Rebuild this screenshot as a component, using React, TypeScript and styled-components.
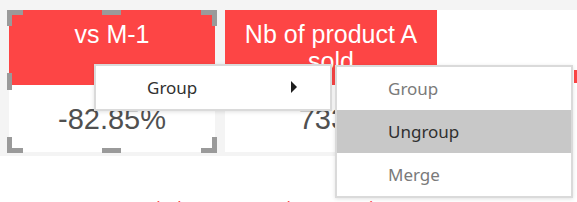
import React from 'react';
import styled, { createGlobalStyle } from 'styled-components';

const GlobalStyle = createGlobalStyle`
  html, body {
    margin: 0;
    padding: 0;
    background: #ffffff;
  }
  body {
    font-family: "Liberation Sans", Arial, sans-serif;
  }
`;

const Page = styled.div`
  position: relative;
  width: 577px;
  height: 202px;
  overflow: hidden;
  background: #ffffff;
`;

const TopStrip = styled.div`
  height: 10px;
  background: #f4f4f4;
`;

const Row = styled.div`
  display: flex;
  align-items: flex-start;
`;

const VisualGroup = styled.div`
  display: flex;
  gap: 10px;
  padding: 0 0 4px 9px;
  background: #f4f4f4;
`;

const Card = styled.div<{ $w: number; $offset?: number }>`
  position: relative;
  width: ${(p) => p.$w}px;
  margin-top: ${(p) => p.$offset ?? 0}px;
  margin-left: ${(p) => (p.$offset ? 137 : 0)}px;
  display: flex;
  flex-direction: column;
  flex-shrink: 0;
`;

const CardHeader = styled.div<{ $h?: number }>`
  height: ${(p) => p.$h ?? 75}px;
  box-sizing: border-box;
  padding: 11px 10px 0;
  background: #fd4545;
  color: #ffffff;
  font-size: 25px;
  line-height: 27px;
  text-align: center;
`;

const CardBody = styled.div`
  height: 67px;
  background: #ffffff;
  color: #505050;
  font-size: 29px;
  display: flex;
  align-items: center;
  justify-content: center;
  padding-top: 1px;
  box-sizing: border-box;
`;

const Handle = styled.div<{ $pos: string }>`
  position: absolute;
  background: #9a9a9a;
  ${(p) => p.$pos}
`;

const BottomTitle = styled.div`
  margin-top: 43px;
  padding-left: 154px;
  color: #ff3d3d;
  font-size: 17px;
  line-height: 17px;
  word-spacing: 7px;
  white-space: nowrap;
`;

const Menu = styled.div<{ $left: number; $top: number; $w: number }>`
  position: absolute;
  left: ${(p) => p.$left}px;
  top: ${(p) => p.$top}px;
  width: ${(p) => p.$w}px;
  box-sizing: border-box;
  background: #ffffff;
  border: 2px solid #dadada;
  box-shadow: 0 1px 4px rgba(0, 0, 0, 0.12);
  font-family: "Noto Sans", "Open Sans", sans-serif;
  font-size: 17px;
`;

const MenuItem = styled.div<{ $muted?: boolean; $active?: boolean }>`
  position: relative;
  height: 43px;
  display: flex;
  align-items: center;
  padding-left: 51px;
  color: ${(p) => (p.$muted ? '#7a7a7a' : '#303030')};
  background: ${(p) => (p.$active ? '#c8c8c8' : 'transparent')};
`;

const SubArrow = styled.span`
  position: absolute;
  right: 33px;
  top: 50%;
  margin-top: -7px;
  width: 0;
  height: 0;
  border-top: 6px solid transparent;
  border-bottom: 6px solid transparent;
  border-left: 6px solid #1e1e1e;
`;

const handles = [
  'left:-2px;top:0;width:16px;height:5px;',
  'left:-2px;top:0;width:5px;height:16px;',
  'right:-2px;top:0;width:16px;height:5px;',
  'right:-2px;top:0;width:5px;height:16px;',
  'left:93px;top:0;width:19px;height:5px;',
  'left:-2px;top:63px;width:5px;height:17px;',
  'left:-2px;bottom:-1px;width:16px;height:5px;',
  'left:-2px;bottom:-1px;width:5px;height:16px;',
  'right:-2px;bottom:-1px;width:16px;height:5px;',
  'right:-2px;bottom:-1px;width:5px;height:16px;',
  'left:93px;bottom:-1px;width:19px;height:5px;',
];

export default function App() {
  return (
    <Page>
      <GlobalStyle />
      <TopStrip />
      <Row>
        <VisualGroup>
          <Card $w={206}>
            <CardHeader>vs M-1</CardHeader>
            <CardBody>-82.85%</CardBody>
            {handles.map((h, i) => (
              <Handle key={i} $pos={h} />
            ))}
          </Card>
          <Card $w={212}>
            <CardHeader>Nb of product A sold</CardHeader>
            <CardBody>7335</CardBody>
          </Card>
        </VisualGroup>
        <Card $w={120} $offset={60}>
          <CardHeader $h={13} />
        </Card>
      </Row>
      <BottomTitle>(valeur moyenne) versus (ventes</BottomTitle>

      <Menu $left={94} $top={64} $w={238}>
        <MenuItem>
          Group
          <SubArrow />
        </MenuItem>
      </Menu>
      <Menu $left={335} $top={65} $w={238}>
        <MenuItem $muted>Group</MenuItem>
        <MenuItem $active>Ungroup</MenuItem>
        <MenuItem $muted>Merge</MenuItem>
      </Menu>
    </Page>
  );
}
